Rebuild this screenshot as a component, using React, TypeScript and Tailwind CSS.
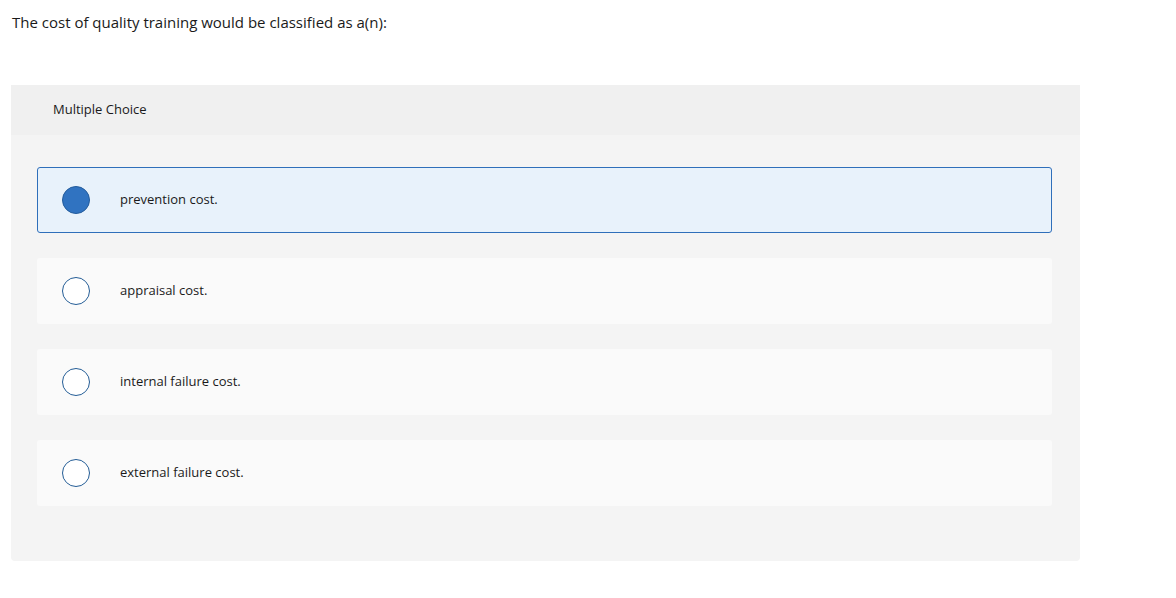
const options = [
  { id: 1, text: "prevention cost.", selected: true },
  { id: 2, text: "appraisal cost.", selected: false },
  { id: 3, text: "internal failure cost.", selected: false },
  { id: 4, text: "external failure cost.", selected: false },
];

export default function App() {
  return (
    <div className="min-h-[598px] w-[1176px] bg-white font-['Open_Sans',sans-serif] text-[#1a1a1a]">
      <p className="px-3 pt-[12px] text-[15px] leading-[20px]">
        The cost of quality training would be classified as a(n):
      </p>
      <div className="ml-[11px] mt-[53px] w-[1069px] overflow-hidden rounded-b-[4px] bg-[#f4f4f4]">
        <div className="flex h-[50px] items-center bg-[#f0f0f0] pl-[42px] text-[13px]">
          Multiple Choice
        </div>
        <div className="flex flex-col gap-[25px] pb-[55px] pl-[26px] pt-[32px]">
          {options.map((opt) => (
            <div
              key={opt.id}
              className={
                opt.selected
                  ? "flex h-[66px] w-[1015px] items-center rounded-[3px] border border-[#2f6fba] bg-[#e8f2fb]"
                  : "flex h-[66px] w-[1015px] items-center rounded-[3px] border border-transparent bg-[#fafafa]"
              }
            >
              <span
                className={
                  opt.selected
                    ? "ml-[24px] h-[28px] w-[28px] rounded-full border border-[#235c9c] bg-[#3073c1]"
                    : "ml-[24px] h-[28px] w-[28px] rounded-full border-[1.5px] border-[#245d96] bg-white"
                }
              />
              <span className="ml-[30px] text-[13px]">{opt.text}</span>
            </div>
          ))}
        </div>
      </div>
    </div>
  );
}
